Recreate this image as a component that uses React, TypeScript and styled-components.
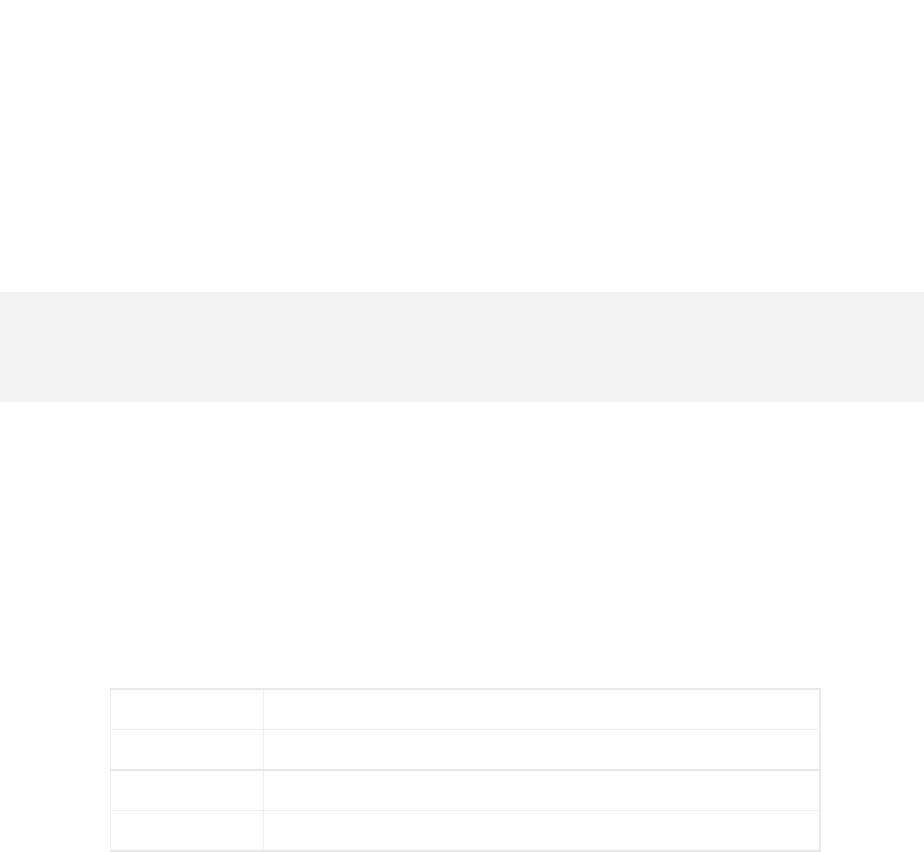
import React from 'react';
import styled, { createGlobalStyle } from 'styled-components';

const GlobalStyle = createGlobalStyle`
  body {
    margin: 0;
    background: #ffffff;
    font-family: 'Liberation Sans', Arial, sans-serif;
  }
`;

const Header = styled.header`
  height: 292px;
`;

const Band = styled.section`
  height: 110px;
  background-color: #f4f4f4;
`;

const Content = styled.main`
  padding: 286px 0 0 110px;
`;

const Table = styled.div`
  width: 711px;
  box-sizing: border-box;
  border-top: 2px solid #e9e9e9;
  border-left: 1px solid #ececec;
`;

// every second row closes a group with a heavier rule
const Row = styled.div<{ $thick?: boolean }>`
  display: grid;
  grid-template-columns: 153px 1fr;
  box-sizing: border-box;
  height: ${(p) => (p.$thick ? '41px' : '40px')};
  border-bottom: ${(p) => (p.$thick ? '2px solid #e9e9e9' : '1px solid #eeeeee')};
`;

const Cell = styled.div<{ $last?: boolean }>`
  box-sizing: border-box;
  border-right: ${(p) => (p.$last ? '2px solid #e9e9e9' : '1px solid #eeeeee')};
`;

const rows = [false, true, false, true];

const App = () => {
  return (
    <>
      <GlobalStyle />
      <Header />
      <Band />
      <Content>
        <Table>
          {rows.map((thick, i) => (
            <Row key={i} $thick={thick}>
              <Cell />
              <Cell $last />
            </Row>
          ))}
        </Table>
      </Content>
    </>
  );
};

export default App;
